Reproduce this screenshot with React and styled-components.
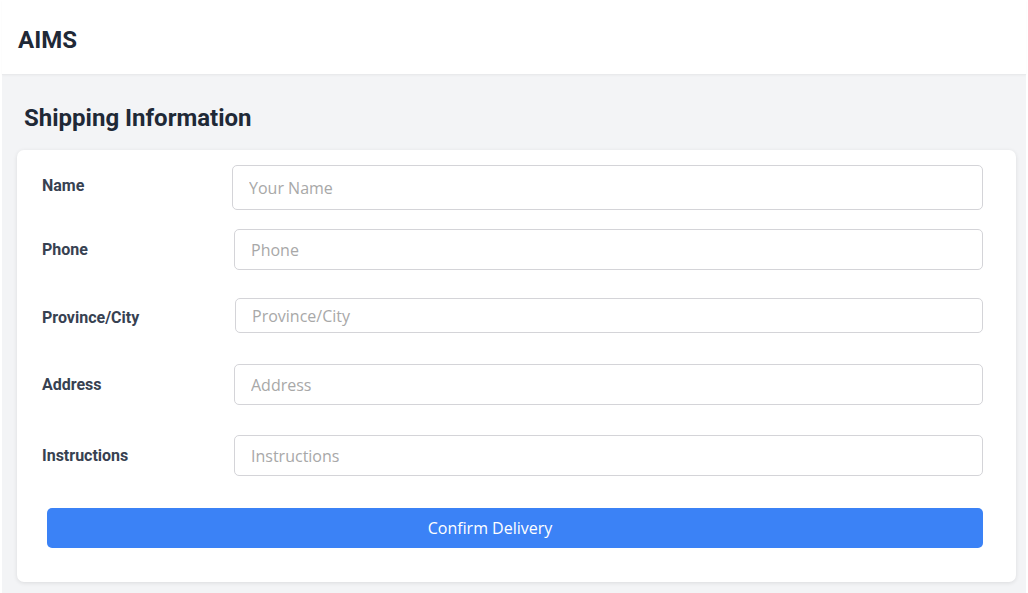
import React from 'react';
import styled, { createGlobalStyle } from 'styled-components';

const GlobalStyle = createGlobalStyle`
  html, body {
    margin: 0;
    padding: 0;
    background: #fff;
  }
  * { box-sizing: border-box; }
`;

const Page = styled.div`
  margin: 0 2px;
  min-height: 593px;
  background: #f3f4f6;
  font-family: Roboto, "Liberation Sans", sans-serif;
  color: #1f2937;
`;

const Header = styled.header`
  height: 75px;
  background: #fff;
  display: flex;
  align-items: center;
  padding-left: 16px;
  padding-top: 6px;
  border-bottom: 1px solid #e9eaec;
  box-shadow: 0 1px 2px rgba(0, 0, 0, 0.03);
`;

const Brand = styled.h1`
  margin: 0;
  font-size: 24px;
  font-weight: 700;
  color: #1f2937;
`;

const Main = styled.main`
  padding: 0 10px 0 15px;
`;

const Title = styled.h2`
  margin: 0;
  padding: 29px 0 0 7px;
  height: 75px;
  font-size: 24px;
  font-weight: 700;
  color: #1f2937;
`;

const Card = styled.div`
  background: #fff;
  border-radius: 7px;
  box-shadow: 0 1px 4px rgba(0, 0, 0, 0.1);
  padding: 15px 33px 34px 25px;
`;

const Row = styled.div`
  display: grid;
  grid-template-columns: ${p => p.$labelWidth}px 1fr;
  align-items: center;
  margin-bottom: ${p => p.$gap}px;
`;

const Label = styled.label`
  font-size: 16px;
  font-weight: 700;
  color: #374151;
  margin-top: ${p => p.$nudge}px;
`;

const Input = styled.input`
  width: 100%;
  height: ${p => p.$h}px;
  border: 1px solid #d4d4d8;
  border-radius: 5px;
  padding: 0 16px;
  font-family: "Open Sans", sans-serif;
  font-size: 16px;
  color: #333;
  background: #fff;
  outline: none;
  &::placeholder { color: #a8a8a8; }
`;

const Button = styled.button`
  display: block;
  width: calc(100% - 5px);
  margin-left: 5px;
  margin-top: 32px;
  height: 40px;
  border: none;
  border-radius: 5px;
  padding: 0 50px 0 0;
  background: #3b82f6;
  color: #fff;
  font-family: "Open Sans", sans-serif;
  font-size: 16px;
  cursor: pointer;
`;

const fields = [
  { label: 'Name', placeholder: 'Your Name', h: 45, lw: 190, gap: 19, nudge: -5 },
  { label: 'Phone', placeholder: 'Phone', h: 41, lw: 192, gap: 28, nudge: -1 },
  { label: 'Province/City', placeholder: 'Province/City', h: 35, lw: 193, gap: 31, nudge: 3 },
  { label: 'Address', placeholder: 'Address', h: 41, lw: 192, gap: 30, nudge: -1 },
  { label: 'Instructions', placeholder: 'Instructions', h: 41, lw: 192, gap: 0, nudge: -1 },
];

export default function App() {
  return (
    <>
      <GlobalStyle />
      <Page>
        <Header>
          <Brand>AIMS</Brand>
        </Header>
        <Main>
          <Title>Shipping Information</Title>
          <Card>
            {fields.map(f => (
              <Row key={f.label} $labelWidth={f.lw} $gap={f.gap}>
                <Label $nudge={f.nudge}>{f.label}</Label>
                <Input $h={f.h} placeholder={f.placeholder} />
              </Row>
            ))}
            <Button>Confirm Delivery</Button>
          </Card>
        </Main>
      </Page>
    </>
  );
}
